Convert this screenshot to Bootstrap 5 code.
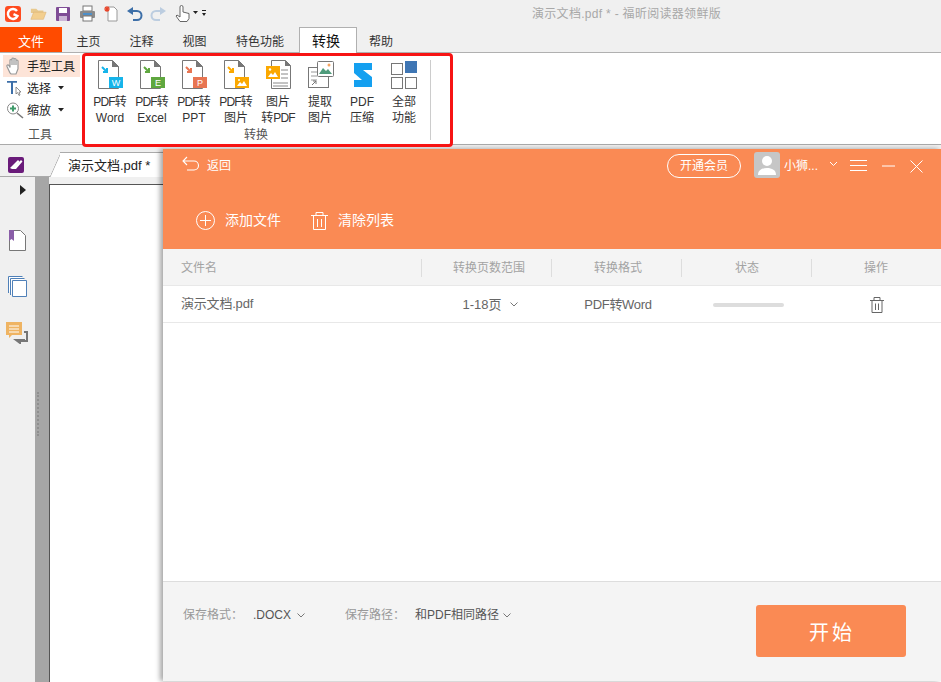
<!DOCTYPE html>
<html lang="zh"><head><meta charset="utf-8"><title>福昕阅读器</title>
<link href="https://cdn.jsdelivr.net/npm/bootstrap@5.3.0/dist/css/bootstrap.min.css" rel="stylesheet">
<style>
html,body{margin:0;height:100%;overflow:hidden}
body{font-family:"Liberation Sans","Noto Sans CJK SC",sans-serif;font-size:12px;color:#333;background:#f0f0f0}
.app{position:relative;width:941px;height:682px;overflow:hidden;background:#f0f0f0}
.tbar{height:27px;padding-left:5px}
.tbar svg{display:block;flex:none}
.wtitle{position:absolute;left:532px;top:6px;color:#a8a8a8;font-size:12px;line-height:16px;letter-spacing:.3px}
.tabs{height:25px;font-size:12px}
.tabi{position:relative;text-align:center;line-height:31px;color:#333;height:25px}
.tabf{width:62px;background:#ff4b00;color:#fff;line-height:30px;font-size:13px}
.tabc{width:58px;background:#fff;border:1px solid #b0b0b0;border-bottom:0;font-size:14px;line-height:26px;color:#111;height:26px;z-index:1;padding-right:4px}
.ribbon{height:93px;background:#fff;border-top:1px solid #b0b0b0;border-bottom:1px solid #aaa}
.lgroup{width:82px;padding:2px 0 0 3px;position:relative}
.lrow{height:22px;gap:3px;padding-left:3px;font-size:12px;line-height:22px;color:#222;width:77px}
.lrow>span{padding-top:2px}
.lrow.on{background:#fde4d8}
.glabel{text-align:center;color:#555;font-size:12px;line-height:14px}
.cgroup{width:349px;padding:0 0 0 7px;border-right:1px solid #ccc;height:80px;margin-top:7px}
.rbtn{width:42px;text-align:center;font-size:12px;line-height:16px;color:#333}
.rbtn svg{display:block;margin:0 auto 2px}
.pz{letter-spacing:-.8px}
.redbox{position:absolute;left:82px;top:53px;width:371px;height:94px;border:3px solid #f71414;border-radius:4px;z-index:3}
.docbar{height:32px;border-bottom:1px solid #aaa;position:relative;z-index:0}
.dtab{position:absolute;left:60px;top:7px;width:115px;height:25px;background:#fff;border-top:1px solid #aaa;font-size:13px;line-height:25px;padding-left:8px;color:#222}
.dtab:before{content:"";position:absolute;left:-5px;top:-1px;width:12px;height:25px;background:#fff;border-left:1px solid #aaa;border-top:1px solid #aaa;border-radius:4px 0 0 0;transform:skewX(-24deg);z-index:-1}
.work{height:505px}
.side{width:35px;padding-top:8px;position:relative}
.side svg{display:block}
.gutter{width:14px;background:#a6a6a6;padding:215px 0 0 2px}
.gripd{width:2px;height:44px;border-left:2px dotted #8f8f8f}
.sheet{flex:1;background:#fff;border-top:1px solid #555;border-left:1px solid #555;margin-top:7px}
.pane{position:absolute;left:163px;top:149px;width:778px;height:532px;background:#fff;box-shadow:-3px 0 5px rgba(0,0,0,.35);border-bottom:1px solid #999;z-index:2}
.phead{height:100px;background:#fa8a54;color:#fff}
.ptop{height:33px;position:relative}
.ptop>*{position:absolute}
.pill{left:504px;top:5px;width:74px;height:24px;border:1px solid #fff;border-radius:12px;text-align:center;line-height:22px;font-size:12px}
.pact{padding:28px 0 0 33px;gap:30px;font-size:14px}
.grid5{display:grid;grid-template-columns:258px 130px 130px 130px 130px}
.thead{height:37px;background:#f4f4f4;border-bottom:1px solid #e8e8e8;color:#a3a3a3;line-height:38px}
.thead>div{text-align:center;position:relative}
.thead>div:first-child{text-align:left;padding-left:18px}
.thead>div:nth-child(2){padding-left:6px}
.thead>div:nth-child(3){padding-left:4px}
.thead>div:nth-child(4){padding-left:2px}
.thead>div+div:before{content:"";position:absolute;left:0;top:10px;height:18px;border-left:1px solid #ddd}
.trow{height:37px;border-bottom:1px solid #e8e8e8;color:#666;font-size:13px;line-height:35px}
.trow>div{text-align:center;display:flex;align-items:center;justify-content:center}
.trow>div:first-child{justify-content:flex-start;padding-left:18px;letter-spacing:-.2px;padding-bottom:2px}
.trow>div:nth-child(2){padding-left:8px}
.trow>div:nth-child(3){padding-left:4px;letter-spacing:-.3px}
.trow>div:nth-child(4){padding-left:4px}
.trow>div:nth-child(5){padding-left:2px}
.pbar{width:71px;height:4px;background:#ddd;border-radius:2px}
.spacer{height:258px}
.pfoot{height:100px;background:#f4f4f4;border-top:1px solid #ddd;padding:23px 35px 0 20px}
.flabel,.fval{font-size:12px;line-height:18px;margin-top:1px}
.flabel{color:#999}
.fval{color:#555}
.startb{width:150px;height:52px;background:#fa8a54;color:#fff;border:0;border-radius:3px;font-size:20px;letter-spacing:3px;padding:3px 0 0 2px;margin-left:auto}
.startb:hover{background:#fa8a54;color:#fff}
</style></head>
<body>
<div class="app">
 <div class="tbar d-flex align-items-center">
  <svg width="16" height="16" viewBox="0 0 16 16" style="margin-right:9px"><rect width="16" height="16" rx="3" fill="#ff4b1f"/><path d="M12 5A5 5 0 1 0 12.500 10L8.500 8.200" fill="none" stroke="#fff" stroke-width="2.400"/></svg>
  <svg width="17" height="16" viewBox="0 0 19 16" style="margin-right:8px"><path d="M1 2h6l2 2h6v3H1z" fill="#e8c98e"/><path d="M1 14l3-8h14l-3 8z" fill="#f3cf8f" stroke="#dcb070" stroke-width=".6"/></svg>
  <svg width="16" height="16" viewBox="0 0 16 16" style="margin-right:8px"><rect width="14" height="14" y="1" x="1" rx="1" fill="#7f4d96"/><rect x="4" y="2" width="8" height="5" fill="#fff"/><rect x="4" y="10" width="8" height="5" fill="#cbb6d6"/></svg>
  <svg width="17" height="17" viewBox="0 0 17 17" style="margin-right:7px"><rect x="4" y="1" width="9" height="5" fill="#fff" stroke="#777"/><rect x="1" y="6" width="15" height="7" rx="1" fill="#8a8a8a"/><rect x="4" y="8" width="9" height="2" fill="#4d8fc9"/><rect x="4" y="11" width="9" height="5" fill="#fff" stroke="#777"/></svg>
  <svg width="16" height="17" viewBox="0 0 16 17" style="margin-right:7px"><path d="M5 2h6l3 3v11H5z" fill="#fff" stroke="#999"/><path d="M4 1v6M1 4h6M2 2l4 4M6 2L2 6" stroke="#e8452a" stroke-width="1.200"/></svg>
  <svg width="17" height="16" viewBox="0 0 17 16" style="margin-right:7px"><path d="M5 5h6a4.500 4.500 0 0 1 0 9H7" fill="none" stroke="#3d6fa8" stroke-width="2"/><path d="M7 1v8L1 5z" fill="#3d6fa8"/></svg>
  <svg width="17" height="16" viewBox="0 0 17 16" style="margin-right:8px"><path d="M12 5H6a4.500 4.500 0 0 0 0 9h4" fill="none" stroke="#bccde0" stroke-width="2"/><path d="M10 1v8l6-4z" fill="#bccde0"/></svg>
  <svg width="36" height="18" viewBox="0 0 36 18"><path d="M5 2a1.500 1.500 0 0 1 3 0v5l6 1.500v5l-2 3H5L1 11l1-1 3 2z" fill="#fff" stroke="#666"/><path d="M18 6h5l-2.500 3z" fill="#222"/><path d="M27 5h4v1h-4zM27 8h4l-2 3z" fill="#222"/></svg>
 </div>
 <div class="wtitle">演示文档.pdf * - 福昕阅读器领鲜版</div>
 <div class="tabs d-flex">
  <div class="tabi tabf">文件</div>
  <div class="tabi" style="width:53px">主页</div>
  <div class="tabi" style="width:53px">注释</div>
  <div class="tabi" style="width:53px">视图</div>
  <div class="tabi" style="width:78px">特色功能</div>
  <div class="tabi tabc">转换</div>
  <div class="tabi" style="width:48px">帮助</div>
 </div>
 <div class="ribbon d-flex">
  <div class="lgroup">
   <div class="lrow on d-flex align-items-center"><svg width="18" height="18" viewBox="0 0 18 18"><path d="M4 16L1 9.500c-.5-1.500 1-2 2-1l1 2V3.500a1 1 0 0 1 2 0V8 2a1 1 0 0 1 2 0v6-5.500a1 1 0 0 1 2 0V8 4a1 1 0 0 1 2 0v8l-2 5H5z" fill="#fff" stroke="#999" stroke-width="1.200"/></svg><span>手型工具</span></div>
   <div class="lrow d-flex align-items-center"><svg width="18" height="18" viewBox="0 0 18 18"><path d="M1 2h10v1.800H7V15H5V3.800H1z" fill="#3d6fa8"/><path d="M10 8l5 5h-2l1 3-1 .5-1.500-3L10 15z" fill="#fff" stroke="#777" stroke-width=".8"/></svg><span>选择</span><svg width="6" height="4" viewBox="0 0 6 4" class="ms-1"><path d="M0 0h6L3 3.500z" fill="#222"/></svg></div>
   <div class="lrow d-flex align-items-center"><svg width="18" height="18" viewBox="0 0 18 18"><circle cx="7" cy="7.500" r="5.500" fill="#fff" stroke="#888"/><path d="M4 7.500h6M7 4.500v6" stroke="#3f9a6a" stroke-width="2"/><path d="M11 12l6 5" stroke="#777" stroke-width="1.600"/></svg><span>缩放</span><svg width="6" height="4" viewBox="0 0 6 4" class="ms-1"><path d="M0 0h6L3 3.500z" fill="#222"/></svg></div>
   <div class="glabel" style="margin-top:7px;width:74px">工具</div>
  </div>
  <div class="cgroup">
   <div class="d-flex">
    <div class="rbtn"><svg width="32" height="32" viewBox="0 0 32 32"><path d="M4.500 .5h14l6 6v22h-20z" fill="#fff" stroke="#777"/><path d="M18 0v7h7z" fill="#777"/><path d="M8 7l5 5m0-4v4H9" fill="none" stroke="#16b4ea" stroke-width="2"/><rect x="15" y="17" width="14" height="11" fill="#16b4ea"/><text x="22" y="26" font-size="9" fill="#fff" text-anchor="middle" font-family="Liberation Sans">W</text></svg><span class="pz">PDF</span>转<br>Word</div>
    <div class="rbtn"><svg width="32" height="32" viewBox="0 0 32 32"><path d="M4.500 .5h14l6 6v22h-20z" fill="#fff" stroke="#777"/><path d="M18 0v7h7z" fill="#777"/><path d="M8 7l5 5m0-4v4H9" fill="none" stroke="#5fa73f" stroke-width="2"/><rect x="15" y="17" width="14" height="11" fill="#5fa73f"/><text x="22" y="26" font-size="9" fill="#fff" text-anchor="middle" font-family="Liberation Sans">E</text></svg><span class="pz">PDF</span>转<br>Excel</div>
    <div class="rbtn"><svg width="32" height="32" viewBox="0 0 32 32"><path d="M4.500 .5h14l6 6v22h-20z" fill="#fff" stroke="#777"/><path d="M18 0v7h7z" fill="#777"/><path d="M8 7l5 5m0-4v4H9" fill="none" stroke="#e87552" stroke-width="2"/><rect x="15" y="17" width="14" height="11" fill="#e87552"/><text x="22" y="26" font-size="9" fill="#fff" text-anchor="middle" font-family="Liberation Sans">P</text></svg><span class="pz">PDF</span>转<br>PPT</div>
    <div class="rbtn"><svg width="32" height="32" viewBox="0 0 32 32"><path d="M4.500 .5h14l6 6v22h-20z" fill="#fff" stroke="#777"/><path d="M18 0v7h7z" fill="#777"/><path d="M8 7l5 5m0-4v4H9" fill="none" stroke="#fba800" stroke-width="2"/><rect x="15" y="17" width="14" height="11" fill="#fba800"/><path d="M17 26l3-4 2 2 2-3 3 5z" fill="#fff"/><circle cx="19" cy="20" r="1" fill="#fff"/></svg><span class="pz">PDF</span>转<br>图片</div>
    <div class="rbtn"><svg width="32" height="32" viewBox="0 0 32 32"><path d="M9.500 .5h14l5 5v23h-19z" fill="#fff" stroke="#777"/><path d="M23 0v6h6z" fill="#777"/><path d="M19 10h7M19 14h7M19 18h7M11 23h15M11 26h15" stroke="#888"/><rect x="4" y="6" width="14" height="13" fill="#fba800"/><path d="M6 17l3-4 2 2 2-3 3 5z" fill="#fff"/><circle cx="8" cy="9.500" r="1.200" fill="#fff"/></svg>图片<br>转<span class="pz">PDF</span></div>
    <div class="rbtn"><svg width="32" height="32" viewBox="0 0 32 32"><rect x="4.500" y="7.500" width="20" height="20" fill="#fff" stroke="#777"/><path d="M7 12h8M7 16h6M7 20h6" stroke="#999"/><path d="M8 25l4-4m0 3v-3h-3" fill="none" stroke="#777"/><rect x="13.500" y="1.500" width="16" height="15" rx="1" fill="#fff" stroke="#777"/><path d="M15 14l4-6 3 3 2-2 4 5z" fill="#4f9c7c"/><circle cx="25" cy="5" r="1.500" fill="#f4a460"/></svg>提取<br>图片</div>
    <div class="rbtn"><svg width="32" height="32" viewBox="0 0 32 32"><path d="M8 3H26V10H19L17 10L26 17V27H8V20H16L8 13Z" fill="#14a0f0"/></svg>PDF<br>压缩</div>
    <div class="rbtn"><svg width="32" height="32" viewBox="0 0 32 32"><rect x="3.500" y="3.500" width="11" height="11" fill="#fff" stroke="#777"/><rect x="17" y="1" width="12" height="12" fill="#3f76b4"/><rect x="3.500" y="17.500" width="11" height="11" fill="#fff" stroke="#777"/><rect x="17.500" y="17.500" width="11" height="11" fill="#fff" stroke="#777"/></svg>全部<br>功能</div>
   </div>
   <div class="glabel" style="width:334px;margin-top:2px">转换</div>
  </div>
 </div>
 <div class="redbox"></div>
 <div class="docbar">
  <svg width="17" height="17" viewBox="0 0 17 17" class="d-block position-absolute" style="left:8px;top:11px"><rect width="16" height="16" y="1" rx="2" fill="#6a1b7a"/><path d="M2 12l8-8 1.500 1.500-4 4.500 5.500-6 1.500 1.500L8 13H4z" fill="#fff"/></svg>
  <div class="dtab">演示文档.pdf *</div>
 </div>
 <div class="work d-flex">
  <div class="side">
   <svg width="8" height="10" viewBox="0 0 8 10" style="margin-left:20px"><path d="M0 0l6 5-6 5z" fill="#222"/></svg>
   <svg width="18" height="22" viewBox="0 0 18 22" style="margin:35px 0 0 9px"><path d="M.5.500h11l5 5v15H.5z" fill="#fff" stroke="#777"/><path d="M0 0h5v11l-2.500-2L0 11z" fill="#8a5ea8"/></svg>
   <svg width="20" height="22" viewBox="0 0 20 22" style="margin:24px 0 0 8px"><path d="M.5 17V.500h14M2.500 19V2.500h14M4.500 4.500h14v16h-14z" fill="#fff" stroke="#4f80b8"/></svg>
   <svg width="22" height="22" viewBox="0 0 22 22" style="margin:24px 0 0 6px"><path d="M18 10h3v9h-7v2l-4-3h9" fill="none" stroke="#777" stroke-width="2"/><path d="M0 0h16v13H6l-3 3v-3H0z" fill="#efb463"/><path d="M3 4h10M3 7h10M3 10h10" stroke="#fff"/></svg>
  </div>
  <div class="gutter"><div class="gripd"></div></div>
  <div class="sheet"></div>
 </div>
 <div class="pane">
  <div class="phead">
   <div class="ptop">
    <svg width="18" height="16" viewBox="0 0 18 16" style="left:19px;top:7px"><path d="M5 1L1 5l4 4M1 5h11a4.500 4.500 0 0 1 0 9H5" fill="none" stroke="#fff" stroke-width="1.100"/></svg>
    <span style="left:44px;top:9px;line-height:16px">返回</span>
    <div class="pill">开通会员</div>
    <svg width="26" height="26" viewBox="0 0 26 26" style="left:591px;top:3px"><rect width="26" height="26" rx="3" fill="#c6c6c6"/><circle cx="13" cy="9" r="5" fill="#fff"/><path d="M4 23c0-5 4-7 9-7s9 2 9 7z" fill="#fff"/></svg>
    <span style="left:621px;top:9px;line-height:16px;white-space:nowrap">小狮...</span>
    <svg width="9" height="6" viewBox="0 0 9 6" style="left:666px;top:12px"><path d="M1 1l3.500 3.500L8 1" fill="none" stroke="#fff"/></svg>
    <svg width="17" height="13" viewBox="0 0 17 13" style="left:687px;top:10px"><path d="M0 1.500h17M0 6.500h17M0 11.500h17" stroke="#fff"/></svg>
    <svg width="13" height="2" viewBox="0 0 13 2" style="left:719px;top:16px"><path d="M0 1h13" stroke="#fff"/></svg>
    <svg width="13" height="13" viewBox="0 0 13 13" style="left:747px;top:11px"><path d="M.5.500l12 12M12.500.500l-12 12" stroke="#fff"/></svg>
   </div>
   <div class="pact d-flex align-items-center">
    <div class="d-flex align-items-center" style="gap:10px"><svg width="19" height="19" viewBox="0 0 19 19"><circle cx="9.500" cy="9.500" r="9" fill="none" stroke="#fff"/><path d="M9.500 4v11M4 9.500h11" stroke="#fff"/></svg><span>添加文件</span></div>
    <div class="d-flex align-items-center" style="gap:10px"><svg width="17" height="18" viewBox="0 0 17 18"><path d="M0 3.500h17M5 3V.500h7V3M2.500 4v13.500h12V4M6.500 7v8M10.500 7v8" fill="none" stroke="#fff"/></svg><span>清除列表</span></div>
   </div>
  </div>
  <div class="thead grid5"><div>文件名</div><div>转换页数范围</div><div>转换格式</div><div>状态</div><div>操作</div></div>
  <div class="trow grid5">
   <div>演示文档.pdf</div>
   <div class="gap-2"><span>1-18页</span><svg width="8" height="5" viewBox="0 0 8 5"><path d="M.5.500L4 4 7.500.500" fill="none" stroke="#777"/></svg></div>
   <div>PDF转Word</div>
   <div><span class="pbar"></span></div>
   <div><svg width="14" height="16" viewBox="0 0 14 16"><path d="M0 3.500h14M4 3V.500h6V3M2 4v11.500h10V4M5.500 6.500v6.500M8.500 6.500v6.500" fill="none" stroke="#666"/></svg></div>
  </div>
  <div class="spacer"></div>
  <div class="pfoot d-flex align-items-start">
   <span class="flabel" style="width:70px">保存格式：</span>
   <span class="fval d-flex align-items-center" style="width:92px;gap:6px">.DOCX <svg width="8" height="5" viewBox="0 0 8 5"><path d="M.5.500L4 4 7.500.500" fill="none" stroke="#777"/></svg></span>
   <span class="flabel" style="width:70px">保存路径：</span>
   <span class="fval d-flex align-items-center gap-1">和PDF相同路径 <svg width="8" height="5" viewBox="0 0 8 5"><path d="M.5.500L4 4 7.500.500" fill="none" stroke="#777"/></svg></span>
   <button type="button" class="btn startb">开始</button>
  </div>
 </div>
</div>
<script src="https://cdn.jsdelivr.net/npm/bootstrap@5.3.0/dist/js/bootstrap.bundle.min.js"></script>
</body></html>
